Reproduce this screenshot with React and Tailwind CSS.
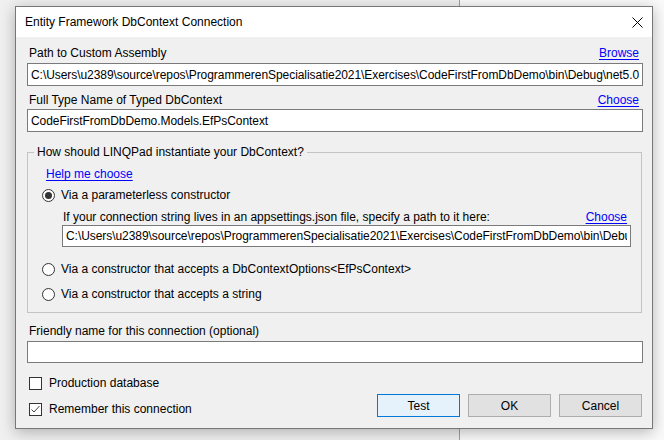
import React from "react";

const PATH =
  "C:\\Users\\u2389\\source\\repos\\ProgrammerenSpecialisatie2021\\Exercises\\CodeFirstFromDbDemo\\bin\\Debug\\net5.0\\CodeFirstFromDbDemo.dll";
const SETTINGS =
  "C:\\Users\\u2389\\source\\repos\\ProgrammerenSpecialisatie2021\\Exercises\\CodeFirstFromDbDemo\\bin\\Debug\\net5.0\\appsettings.json";

const Link = ({ children, className = "" }) => (
  <a className={"text-[#0000ff] underline underline-offset-[2px] cursor-pointer " + className}>{children}</a>
);

const TextBox = ({ value = "", className = "" }) => (
  <input
    readOnly
    value={value}
    className={"block w-full bg-white border border-[#7a7a7a] px-[3px] outline-none text-black tracking-[-0.06px] " + className}
  />
);

const Radio = ({ checked, label }) => (
  <label className="flex items-center h-[16px] leading-[16px]">
    <svg width="13" height="13" viewBox="0 0 13 13" className="shrink-0">
      <circle cx="6.5" cy="6.5" r="6" fill="#fff" stroke="#333" strokeWidth="1" />
      {checked && <circle cx="6.5" cy="6.5" r="3.5" fill="#333" />}
    </svg>
    <span className="ml-[6px]">{label}</span>
  </label>
);

const Check = ({ checked, label }) => (
  <label className="flex items-center h-[16px] leading-[16px] pl-[2px]">
    <svg width="13" height="13" viewBox="0 0 13 13" className="shrink-0">
      <rect x="0.5" y="0.5" width="12" height="12" fill="#fff" stroke="#333" strokeWidth="1" />
      {checked && <path d="M2.5 6.5 L5 9 L10.5 3" fill="none" stroke="#444" strokeWidth="1" />}
    </svg>
    <span className="ml-[7px]">{label}</span>
  </label>
);

const Button = ({ children, primary }) => (
  <button
    className={
      "w-[83px] h-[23px] border text-black " +
      (primary ? "border-[#0078d7] bg-[#e5f1fb]" : "border-[#adadad] bg-[#e1e1e1]")
    }
  >
    {children}
  </button>
);

export default function App() {
  return (
    <div className="relative w-[664px] h-[440px] overflow-hidden flex font-['Liberation_Sans',Arial,sans-serif] text-[12px] text-black">
      {/* desktop behind the dialog */}
      <div className="w-[459px] bg-[#f0f0f0]" />
      <div className="w-px bg-[#a0a0a0]" />
      <div className="flex-1 bg-[#fafafa]" />

      {/* dialog window */}
      <div className="absolute left-[15px] top-[6px] w-[638px] border border-[#777] bg-[#f0f0f0] shadow-[0_3px_14px_rgba(0,0,0,0.28)]">
        <div className="h-[30px] bg-white flex items-center justify-between pl-[9px] pr-[9px]">
          <span>Entity Framework DbContext Connection</span>
          <svg width="11" height="11" viewBox="0 0 11 11">
            <path d="M0.5 0.5 L10.5 10.5 M10.5 0.5 L0.5 10.5" stroke="#000" strokeWidth="1" />
          </svg>
        </div>

        <div className="pl-[11px] pr-[9px] pt-[8px] pb-[11px]">
          <div className="flex justify-between leading-[16px]">
            <span className="pl-[2px]">Path to Custom Assembly</span>
            <Link className="mr-[4px]">Browse</Link>
          </div>
          <TextBox value={PATH} className="mt-[2px] h-[23px]" />

          <div className="flex justify-between leading-[16px] mt-[6px]">
            <span className="pl-[2px]">Full Type Name of Typed DbContext</span>
            <Link className="mr-[4px]">Choose</Link>
          </div>
          <TextBox value="CodeFirstFromDbDemo.Models.EfPsContext" className="mt-[1px] h-[23px]" />

          <fieldset className="mt-[12px] mr-[1px] border border-[#c4c4c4]">
            <legend className="ml-[6px] px-[3px] leading-[16px]">How should LINQPad instantiate your DbContext?</legend>
            <div className="pl-[14px] pr-[10px] pt-[6px] pb-[10px]">
              <div className="leading-[16px]">
                <Link className="ml-[4px]">Help me choose</Link>
              </div>
              <div className="mt-[5px]">
                <Radio checked label="Via a parameterless constructor" />
              </div>
              <div className="ml-[20px] mt-[6px]">
                <div className="flex justify-between leading-[16px]">
                  <span className="pl-[1px]">
                    If your connection string lives in an appsettings.json file, specify a path to it here:
                  </span>
                  <Link className="mr-[4px]">Choose</Link>
                </div>
                <TextBox value={SETTINGS} className="h-[22px]" />
              </div>
              <div className="mt-[14px]">
                <Radio label="Via a constructor that accepts a DbContextOptions<EfPsContext>" />
              </div>
              <div className="mt-[9px]">
                <Radio label="Via a constructor that accepts a string" />
              </div>
            </div>
          </fieldset>

          <div className="mt-[10px] leading-[16px] pl-[2px]">Friendly name for this connection (optional)</div>
          <TextBox className="mt-[2px] h-[22px]" />

          <div className="mt-[12px] flex justify-between items-end">
            <div className="flex flex-col gap-[10px]">
              <Check label="Production database" />
              <Check checked label="Remember this connection" />
            </div>
            <div className="flex gap-[8px] mr-[1px]">
              <Button primary>Test</Button>
              <Button>OK</Button>
              <Button>Cancel</Button>
            </div>
          </div>
        </div>
      </div>
    </div>
  );
}
